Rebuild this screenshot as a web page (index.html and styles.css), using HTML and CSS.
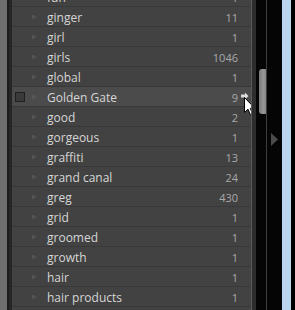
FILE: index.html
```html
<!DOCTYPE html>
<html>
<head>
  <title>Keyword List</title>
  <link rel="stylesheet" href="styles.css">
</head>
<body>
  <div class="app">
    <div class="rail"></div>
    <div class="gutter"></div>

    <div class="keywords">
      <ul class="keyword-list">
        <li class="row"><span class="check"></span><span class="dots"></span><span class="name">fun</span><span class="count">1</span></li>
        <li class="row"><span class="check"></span><span class="dots"></span><span class="name">ginger</span><span class="count">11</span></li>
        <li class="row"><span class="check"></span><span class="dots"></span><span class="name">girl</span><span class="count">1</span></li>
        <li class="row"><span class="check"></span><span class="dots"></span><span class="name">girls</span><span class="count">1046</span></li>
        <li class="row"><span class="check"></span><span class="dots"></span><span class="name">global</span><span class="count">1</span></li>
        <li class="row hover">
          <span class="check"><span class="box"></span></span><span class="dots"></span><span class="name">Golden Gate</span><span class="count">9</span>
          <svg class="goto" width="8" height="8" viewBox="0 0 8 8"><path d="M0 2.5 H4 V0.5 L7.5 4 L4 7.5 V5.5 H0 Z" fill="#dcdcdc"/></svg>
          <svg class="cursor" width="12" height="19" viewBox="0 0 12 19"><path d="M0.5 0.5 V15.5 L4 12.2 L6.4 17.8 L8.6 16.9 L6.3 11.4 H11 Z" fill="#fff" stroke="#000" stroke-width="1"/></svg>
        </li>
        <li class="row"><span class="check"></span><span class="dots"></span><span class="name">good</span><span class="count">2</span></li>
        <li class="row"><span class="check"></span><span class="dots"></span><span class="name">gorgeous</span><span class="count">1</span></li>
        <li class="row"><span class="check"></span><span class="dots"></span><span class="name">graffiti</span><span class="count">13</span></li>
        <li class="row"><span class="check"></span><span class="dots"></span><span class="name">grand canal</span><span class="count">24</span></li>
        <li class="row"><span class="check"></span><span class="dots"></span><span class="name">greg</span><span class="count">430</span></li>
        <li class="row"><span class="check"></span><span class="dots"></span><span class="name">grid</span><span class="count">1</span></li>
        <li class="row"><span class="check"></span><span class="dots"></span><span class="name">groomed</span><span class="count">1</span></li>
        <li class="row"><span class="check"></span><span class="dots"></span><span class="name">growth</span><span class="count">1</span></li>
        <li class="row"><span class="check"></span><span class="dots"></span><span class="name">hair</span><span class="count">1</span></li>
        <li class="row"><span class="check"></span><span class="dots"></span><span class="name">hair products</span><span class="count">1</span></li>
      </ul>
    </div>

    <div class="scroll"><div class="thumb"></div></div>
    <div class="divider"></div>
    <div class="collapse">
      <svg width="7" height="13" viewBox="0 0 7 13"><path d="M0 0 L7 6.5 L0 13 Z" fill="#4b4b4b"/></svg>
    </div>
    <div class="edge"></div>
  </div>
</body>
</html>
```

FILE: styles.css
```css
body {
  margin: 0;
  background: #000;
  font-family: "Open Sans", "Liberation Sans", sans-serif;
}

.app {
  display: flex;
  width: 295px;
  height: 310px;
  overflow: hidden;
}

.rail {
  width: 7px;
  background: #6e6e6e;
}

.gutter {
  width: 3px;
  border-left: 2px solid #1b1b1b;
  background: #262626;
}

.keywords {
  width: 239px;
  border-right: 1px solid #5a5a5a;
  background: #424242;
  overflow: hidden;
}

.keyword-list {
  list-style: none;
  margin: -13px 0 0 0;
  padding: 0;
}

.row {
  position: relative;
  display: grid;
  grid-template-columns: 17px 15px 1fr auto;
  align-items: center;
  height: 20px;
  box-sizing: border-box;
  padding: 1px 13px 0 3px;
  border-bottom: 1px solid #383838;
}

.row.hover {
  background: #4b4b4b;
}

.check .box {
  display: block;
  width: 8px;
  height: 8px;
  border: 1px solid #202020;
  background: #3a3a3a;
}

.dots {
  width: 5px;
  height: 5px;
  background:
    radial-gradient(circle, #5e5e5e 0.6px, transparent 0.9px) 0 0 / 2px 2px;
  clip-path: polygon(0 0, 100% 50%, 0 100%);
}

.name {
  font-size: 12px;
  color: #d6d6d6;
  white-space: nowrap;
}

.count {
  font-size: 11px;
  color: #a9a9a9;
  text-align: right;
}

.goto {
  position: absolute;
  right: 2px;
  top: 5px;
}

.cursor {
  position: absolute;
  left: 232px;
  top: 10px;
}

.scroll {
  width: 14px;
  border-left: 4px solid #2d2d2d;
  background: #050505;
  padding: 69px 0 0 3px;
  box-sizing: border-box;
}

.thumb {
  width: 9px;
  height: 45px;
  border-radius: 3px;
  background: linear-gradient(to right, #7a7a7a, #969696 50%, #7a7a7a);
}

.divider {
  width: 1px;
  background: #3c3c3c;
}

.collapse {
  width: 15px;
  background: #050505;
  display: flex;
  align-items: flex-start;
  padding: 133px 0 0 4px;
  box-sizing: border-box;
}

.edge {
  width: 9px;
  background: #bcd5ee;
}
```
